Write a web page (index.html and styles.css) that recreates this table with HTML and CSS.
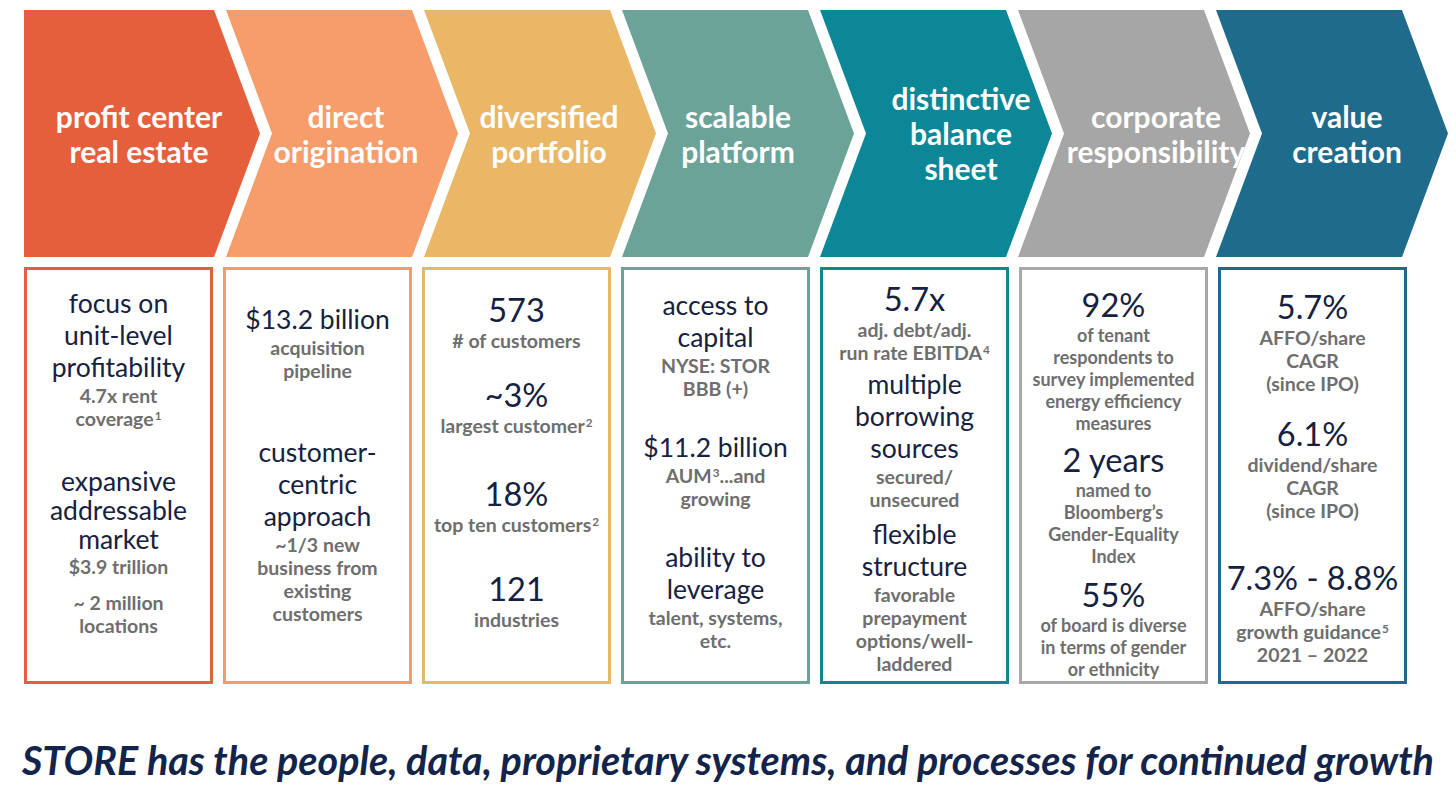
FILE: index.html
```html
<!DOCTYPE html>
<html lang="en">
<head>
<meta charset="utf-8">
<title>STORE Capital — business model</title>
<link rel="stylesheet" href="styles.css">
</head>
<body>
<main class="page">
  <div class="chevrons">
    <div class="chev chev-first ch1"><span class="chev-label">profit center<br>real estate</span></div>
    <div class="chev ch2"><span class="chev-label">direct<br>origination</span></div>
    <div class="chev ch3"><span class="chev-label">diversified<br>portfolio</span></div>
    <div class="chev ch4"><span class="chev-label">scalable<br>platform</span></div>
    <div class="chev ch5"><span class="chev-label">distinctive<br>balance<br>sheet</span></div>
    <div class="chev ch6"><span class="chev-label">corporate<br>responsibility</span></div>
    <div class="chev ch7"><span class="chev-label">value<br>creation</span></div>
  </div>

  <div class="cards">
    <section class="card c1">
      <div class="grp">
        <div class="m">focus on</div>
        <div class="m">unit-level</div>
        <div class="m">profitability</div>
        <div class="s">4.7x rent</div>
        <div class="s">coverage<sup class="fn">1</sup></div>
      </div>
      <div class="grp compact">
        <div class="m">expansive</div>
        <div class="m">addressable</div>
        <div class="m">market</div>
        <div class="s">$3.9 trillion</div>
      </div>
      <div class="grp">
        <div class="s">~ 2 million</div>
        <div class="s">locations</div>
      </div>
    </section>

    <section class="card c2">
      <div class="grp">
        <div class="m">$13.2 billion</div>
        <div class="s">acquisition</div>
        <div class="s">pipeline</div>
      </div>
      <div class="grp">
        <div class="m">customer-</div>
        <div class="m">centric</div>
        <div class="m">approach</div>
        <div class="s">~1/3 new</div>
        <div class="s">business from</div>
        <div class="s">existing</div>
        <div class="s">customers</div>
      </div>
    </section>

    <section class="card c3">
      <div class="grp">
        <div class="b">573</div>
        <div class="s"># of customers</div>
      </div>
      <div class="grp">
        <div class="b">~3%</div>
        <div class="s">largest customer<sup class="fn">2</sup></div>
      </div>
      <div class="grp">
        <div class="b">18%</div>
        <div class="s">top ten customers<sup class="fn">2</sup></div>
      </div>
      <div class="grp">
        <div class="b">121</div>
        <div class="s">industries</div>
      </div>
    </section>

    <section class="card c4">
      <div class="grp">
        <div class="m">access to</div>
        <div class="m">capital</div>
        <div class="s">NYSE: STOR</div>
        <div class="s">BBB (+)</div>
      </div>
      <div class="grp">
        <div class="m">$11.2 billion</div>
        <div class="s">AUM<sup class="fn">3</sup>...and</div>
        <div class="s">growing</div>
      </div>
      <div class="grp">
        <div class="m">ability to</div>
        <div class="m">leverage</div>
        <div class="s">talent, systems,</div>
        <div class="s">etc.</div>
      </div>
    </section>

    <section class="card c5">
      <div class="grp">
        <div class="b">5.7x</div>
        <div class="s">adj. debt/adj.</div>
        <div class="s">run rate EBITDA<sup class="fn">4</sup></div>
      </div>
      <div class="grp">
        <div class="m">multiple</div>
        <div class="m">borrowing</div>
        <div class="m">sources</div>
        <div class="s">secured/</div>
        <div class="s">unsecured</div>
      </div>
      <div class="grp">
        <div class="m">flexible</div>
        <div class="m">structure</div>
        <div class="s">favorable</div>
        <div class="s">prepayment</div>
        <div class="s">options/well-</div>
        <div class="s">laddered</div>
      </div>
    </section>

    <section class="card c6">
      <div class="grp">
        <div class="b">92%</div>
        <div class="s">of tenant</div>
        <div class="s">respondents to</div>
        <div class="s">survey implemented</div>
        <div class="s">energy efficiency</div>
        <div class="s">measures</div>
      </div>
      <div class="grp">
        <div class="b">2 years</div>
        <div class="s">named to</div>
        <div class="s">Bloomberg’s</div>
        <div class="s">Gender-Equality</div>
        <div class="s">Index</div>
      </div>
      <div class="grp">
        <div class="b">55%</div>
        <div class="s">of board is diverse</div>
        <div class="s">in terms of gender</div>
        <div class="s">or ethnicity</div>
      </div>
    </section>

    <section class="card c7">
      <div class="grp">
        <div class="b">5.7%</div>
        <div class="s">AFFO/share</div>
        <div class="s">CAGR</div>
        <div class="s">(since IPO)</div>
      </div>
      <div class="grp">
        <div class="b">6.1%</div>
        <div class="s">dividend/share</div>
        <div class="s">CAGR</div>
        <div class="s">(since IPO)</div>
      </div>
      <div class="grp">
        <div class="b">7.3% - 8.8%</div>
        <div class="s">AFFO/share</div>
        <div class="s">growth guidance<sup class="fn">5</sup></div>
        <div class="s">2021 – 2022</div>
      </div>
    </section>
  </div>

  <p class="tagline">STORE has the people, data, proprietary systems, and processes for continued growth</p>
</main>
</body>
</html>
```

FILE: styles.css
```css
* { box-sizing: border-box; }

html, body {
  margin: 0;
  padding: 0;
  background: #ffffff;
}

body {
  font-family: Lato, "Open Sans", "Liberation Sans", sans-serif;
  color: #16213f;
}

.page {
  width: 1456px;
  height: 793px;
  padding: 10px 0 0 24px;
  overflow: hidden;
}

/* ---------- chevron row ---------- */
.chevrons {
  display: flex;
  height: 247px;
}

.chev {
  flex: 0 0 232px;
  height: 247px;
  margin-left: -34px;
  display: flex;
  align-items: center;
  justify-content: center;
  clip-path: polygon(0 0, 186px 0, 100% 50%, 186px 100%, 0 100%, 46px 50%);
}

.chev-first {
  margin-left: 0;
  flex-basis: 236px;
  clip-path: polygon(0 0, 190px 0, 100% 50%, 190px 100%, 0 100%);
}

.chev-label {
  color: #ffffff;
  font-weight: 700;
  font-size: 30px;
  line-height: 35px;
  text-align: center;
  white-space: nowrap;
}

.ch1 { background: #e65f3c; padding-right: 6px; }
.ch2 { background: #f69d6b; padding-left: 8px; }
.ch3 { background: #eab766; padding-left: 18px; }
.ch4 { background: #6ba398; }
.ch5 { background: #0c8797; padding-left: 50px; }
.ch6 { background: #a6a6a6; padding-left: 44px; }
.ch7 { background: #1e6b8c; padding-left: 30px; }

/* ---------- cards ---------- */
.cards {
  display: grid;
  grid-template-columns: repeat(7, 189px);
  column-gap: 10px;
  margin-top: 10px;
}

.card {
  height: 417px;
  border: 3px solid #999;
  display: flex;
  flex-direction: column;
  align-items: center;
  text-align: center;
}

.c1 { border-color: #e2603d; }
.c2 { border-color: #f39c6b; }
.c3 { border-color: #e9b766; }
.c4 { border-color: #6ba398; }
.c5 { border-color: #138595; }
.c6 { border-color: #a8a8a8; }
.c7 { border-color: #1f6a8a; }

.grp {
  display: flex;
  flex-direction: column;
  align-items: center;
}

.m {
  font-weight: 400;
  font-size: 26.5px;
  line-height: 32px;
  color: #16213f;
  white-space: nowrap;
}

.b {
  font-weight: 400;
  font-size: 32.5px;
  line-height: 36px;
  color: #16213f;
  white-space: nowrap;
}

.s {
  font-weight: 700;
  font-size: 19.5px;
  line-height: 23px;
  color: #6e6e6e;
  white-space: nowrap;
}

.m + .s,
.b + .s { margin-top: 1px; }

.compact .m { line-height: 29px; }

.c6 .s {
  font-size: 18px;
  line-height: 22px;
}

.fn {
  font-size: 0.6em;
  line-height: 0;
  vertical-align: 0.55em;
  margin-left: 1px;
}

/* vertical rhythm per column */
.c1 > .grp:nth-child(1) { margin-top: 17px; }
.c1 > .grp:nth-child(2) { margin-top: 37px; }
.c1 > .grp:nth-child(3) { margin-top: 13px; }

.c2 > .grp:nth-child(1) { margin-top: 33px; }
.c2 > .grp:nth-child(2) { margin-top: 54px; }

.c3 > .grp:nth-child(1) { margin-top: 22px; }
.c3 > .grp:nth-child(2) { margin-top: 25px; }
.c3 > .grp:nth-child(3) { margin-top: 39px; }
.c3 > .grp:nth-child(4) { margin-top: 35px; }

.c4 > .grp:nth-child(1) { margin-top: 19px; }
.c4 > .grp:nth-child(2) { margin-top: 31px; }
.c4 > .grp:nth-child(3) { margin-top: 31px; }

.c5 > .grp:nth-child(1) { margin-top: 11px; }
.c5 > .grp:nth-child(2) { margin-top: 4px; }
.c5 > .grp:nth-child(3) { margin-top: 7px; }

.c6 > .grp:nth-child(1) { margin-top: 17px; }
.c6 > .grp:nth-child(2) { margin-top: 8px; }
.c6 > .grp:nth-child(3) { margin-top: 10px; }

.c7 > .grp:nth-child(1) { margin-top: 19px; }
.c7 > .grp:nth-child(2) { margin-top: 21px; }
.c7 > .grp:nth-child(3) { margin-top: 38px; }

/* ---------- tagline ---------- */
.tagline {
  margin: 52px 0 0 -2px;
  font-weight: 700;
  font-style: italic;
  font-size: 39.5px;
  line-height: 47px;
  color: #13244a;
  white-space: nowrap;
}
```
